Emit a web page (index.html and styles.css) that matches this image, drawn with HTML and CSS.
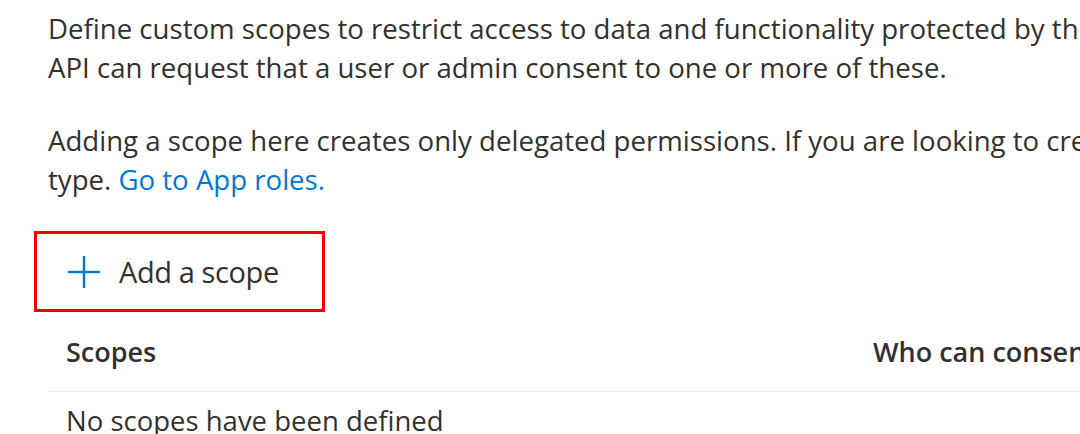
FILE: index.html
```html
<!DOCTYPE html>
<html>
<head>
<meta charset="utf-8">
<title>Expose an API - Scopes</title>
<link rel="stylesheet" href="styles.css">
</head>
<body>
<div class="content">
  <p class="intro">Define custom scopes to restrict access to data and functionality protected by the<br>API can request that a user or admin consent to one or more of these.</p>
  <p class="intro second">Adding a scope here creates only delegated permissions. If you are looking to create application-only scopes, use 'App roles' and define app roles assignable to application<br>type. <a class="link" href="#">Go to App roles.</a></p>
  <div class="toolbar">
    <button class="cmdButton" type="button">
      <svg class="plusIcon" width="34" height="34" viewBox="0 0 34 34">
        <line x1="17" y1="1" x2="17" y2="33" stroke="#0078d4" stroke-width="2.4"/>
        <line x1="1" y1="17" x2="33" y2="17" stroke="#0078d4" stroke-width="2.4"/>
      </svg>
      <span class="cmdLabel">Add a scope</span>
    </button>
  </div>
  <div class="gridHead">
    <div class="colScopes">Scopes</div>
    <div class="colConsent">Who can consent</div>
  </div>
  <div class="gridRow">No scopes have been defined</div>
</div>
</body>
</html>
```

FILE: styles.css
```css
body {
  margin: 0;
  background-color: white;
  font-family: "Open Sans", "Noto Sans", sans-serif;
  color: #323130;
  overflow: hidden;
}
.content {
  padding: 9px 0 0 48px;
  white-space: nowrap;
}
.intro {
  margin: 0;
  font-size: 27.6px;
  line-height: 39px;
}
.second {
  margin-top: 34px;
}
.link {
  color: #0078d4;
  text-decoration: none;
}
.toolbar {
  margin: 32px 0 0 -14px;
}
.cmdButton {
  display: flex;
  align-items: center;
  box-sizing: border-box;
  width: 291px;
  height: 81px;
  padding: 0 0 0 30px;
  border: 3px solid #f50000;
  background: white;
  font-family: inherit;
  color: #323130;
}
.plusIcon {
  display: block;
}
.cmdLabel {
  margin-left: 18px;
  font-size: 29px;
  letter-spacing: -0.4px;
}
.gridHead {
  display: flex;
  margin-top: 20px;
  padding-bottom: 20px;
  border-bottom: 1px solid #edebe9;
  font-size: 27px;
  font-weight: 600;
  line-height: 39px;
}
.colScopes {
  flex: 0 0 807px;
  padding-left: 18px;
  box-sizing: border-box;
}
.colConsent {
  flex: 0 0 auto;
  padding-left: 18px;
}
.gridRow {
  padding: 9px 0 0 18px;
  font-size: 27.5px;
  line-height: 39px;
}
```
